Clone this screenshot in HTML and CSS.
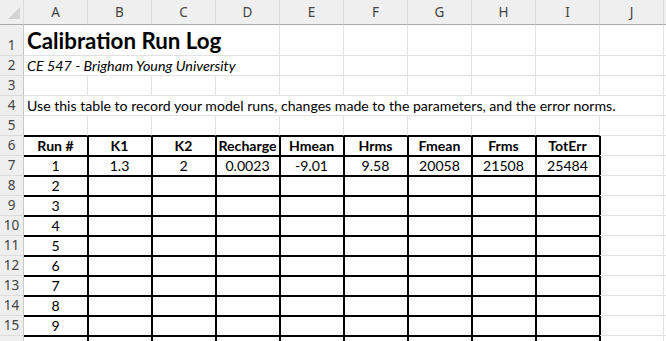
FILE: index.html
```html
<!DOCTYPE html>
<html lang="en">
<head>
  <meta charset="UTF-8">
  <title>Calibration Run Log</title>
  <link rel="stylesheet" href="styles.css">
</head>
<body>
  <div class="sheet">
    <!-- column headers -->
    <div class="ch corner"><svg width="12" height="12" viewBox="0 0 12 12"><polygon points="12,0 12,12 0,12" fill="#d4d4d4"/></svg></div>
    <div class="ch">A</div><div class="ch">B</div><div class="ch">C</div><div class="ch">D</div><div class="ch">E</div>
    <div class="ch">F</div><div class="ch">G</div><div class="ch">H</div><div class="ch">I</div><div class="ch">J</div><div class="ch"></div>

    <!-- 1 -->
    <div class="rh">1</div>
    <div class="title span4">Calibration Run Log</div>
    <div></div><div></div><div></div><div></div><div></div><div></div><div></div>

    <!-- 2 -->
    <div class="rh">2</div>
    <div class="sub span4">CE 547 - Brigham Young University</div>
    <div></div><div></div><div></div><div></div><div></div><div></div><div></div>

    <!-- 3 -->
    <div class="rh">3</div>
    <div></div><div></div><div></div><div></div><div></div><div></div><div></div><div></div><div></div><div></div><div></div>

    <!-- 4 -->
    <div class="rh">4</div>
    <div class="span10">Use this table to record your model runs, changes made to the parameters, and the error norms.</div>
    <div></div>

    <!-- 5 -->
    <div class="rh">5</div>
    <div class="above"></div><div class="above"></div><div class="above"></div><div class="above"></div><div class="above"></div>
    <div class="above"></div><div class="above"></div><div class="above"></div><div class="above"></div>
    <div></div><div></div>

    <!-- 6 : table header -->
    <div class="rh">6</div>
    <div class="d first hd">Run #</div><div class="d hd">K1</div><div class="d hd">K2</div><div class="d hd">Recharge</div><div class="d hd">Hmean</div>
    <div class="d hd">Hrms</div><div class="d hd">Fmean</div><div class="d hd">Frms</div><div class="d hd">TotErr</div>
    <div class="after"></div><div></div>

    <!-- 7 -->
    <div class="rh">7</div>
    <div class="d first">1</div><div class="d">1.3</div><div class="d">2</div><div class="d">0.0023</div><div class="d">-9.01</div>
    <div class="d">9.58</div><div class="d">20058</div><div class="d">21508</div><div class="d">25484</div>
    <div class="after"></div><div></div>

    <!-- 8 -->
    <div class="rh">8</div>
    <div class="d first">2</div><div class="d"></div><div class="d"></div><div class="d"></div><div class="d"></div>
    <div class="d"></div><div class="d"></div><div class="d"></div><div class="d"></div>
    <div class="after"></div><div></div>

    <!-- 9 -->
    <div class="rh">9</div>
    <div class="d first">3</div><div class="d"></div><div class="d"></div><div class="d"></div><div class="d"></div>
    <div class="d"></div><div class="d"></div><div class="d"></div><div class="d"></div>
    <div class="after"></div><div></div>

    <!-- 10 -->
    <div class="rh">10</div>
    <div class="d first">4</div><div class="d"></div><div class="d"></div><div class="d"></div><div class="d"></div>
    <div class="d"></div><div class="d"></div><div class="d"></div><div class="d"></div>
    <div class="after"></div><div></div>

    <!-- 11 -->
    <div class="rh">11</div>
    <div class="d first">5</div><div class="d"></div><div class="d"></div><div class="d"></div><div class="d"></div>
    <div class="d"></div><div class="d"></div><div class="d"></div><div class="d"></div>
    <div class="after"></div><div></div>

    <!-- 12 -->
    <div class="rh">12</div>
    <div class="d first">6</div><div class="d"></div><div class="d"></div><div class="d"></div><div class="d"></div>
    <div class="d"></div><div class="d"></div><div class="d"></div><div class="d"></div>
    <div class="after"></div><div></div>

    <!-- 13 -->
    <div class="rh">13</div>
    <div class="d first">7</div><div class="d"></div><div class="d"></div><div class="d"></div><div class="d"></div>
    <div class="d"></div><div class="d"></div><div class="d"></div><div class="d"></div>
    <div class="after"></div><div></div>

    <!-- 14 -->
    <div class="rh">14</div>
    <div class="d first">8</div><div class="d"></div><div class="d"></div><div class="d"></div><div class="d"></div>
    <div class="d"></div><div class="d"></div><div class="d"></div><div class="d"></div>
    <div class="after"></div><div></div>

    <!-- 15 -->
    <div class="rh">15</div>
    <div class="d first">9</div><div class="d"></div><div class="d"></div><div class="d"></div><div class="d"></div>
    <div class="d"></div><div class="d"></div><div class="d"></div><div class="d"></div>
    <div class="after"></div><div></div>

    <!-- 16 (only its top edge shows) -->
    <div class="rh"></div>
    <div class="d first"></div><div class="d"></div><div class="d"></div><div class="d"></div><div class="d"></div>
    <div class="d"></div><div class="d"></div><div class="d"></div><div class="d"></div>
    <div class="after"></div><div></div>
  </div>
</body>
</html>
```

FILE: styles.css
```css
html, body { margin: 0; overflow: hidden; background: #fff; }

.sheet {
  display: grid;
  grid-template-columns: 24px repeat(11, 64px);
  grid-template-rows: 25px 31px;
  grid-auto-rows: 20px;
  font-family: Lato, "Liberation Sans", sans-serif;
  font-size: 14.1px;
  color: #000;
}

.sheet > div {
  box-sizing: border-box;
  display: flex;
  align-items: flex-end;
  padding: 0 3px 1px;
  border-right: 1px solid #e1e1e1;
  border-bottom: 1px solid #e1e1e1;
  white-space: nowrap;
  overflow: hidden;
}

/* headers */
.sheet > .ch {
  background: #efefef;
  border-right-color: #dcdcdc;
  border-bottom-color: #ababab;
  align-items: center;
  justify-content: center;
  padding: 0;
  color: #444;
  font-family: "Noto Sans", sans-serif;
  font-size: 13.5px;
}
.sheet > .corner { align-items: flex-end; justify-content: flex-end; padding: 0 3px 5px; }
.sheet > .rh {
  background: #efefef;
  border-right-color: #c9c9c9;
  border-bottom-color: #dcdcdc;
  justify-content: center;
  padding: 0 0 1px;
  color: #444;
  font-family: "Noto Sans", sans-serif;
  font-size: 13.5px;
}

/* text cells */
.span4 { grid-column: span 4; }
.span10 { grid-column: span 10; }
.title { font-size: 22.3px; font-weight: bold; }
.sub { font-style: italic; font-size: 14.3px; }

/* bordered table */
.sheet > .above { border-bottom: 1px solid #000; }
.sheet > .d {
  justify-content: center;
  border-right-color: #000;
  border-bottom-color: #000;
  box-shadow: inset 1px 1px 0 #000;
}
.sheet > .d.first { box-shadow: inset 0 1px 0 #000; }
.sheet > .after { box-shadow: inset 1px 0 0 #000; }
.hd { font-weight: bold; }
```
